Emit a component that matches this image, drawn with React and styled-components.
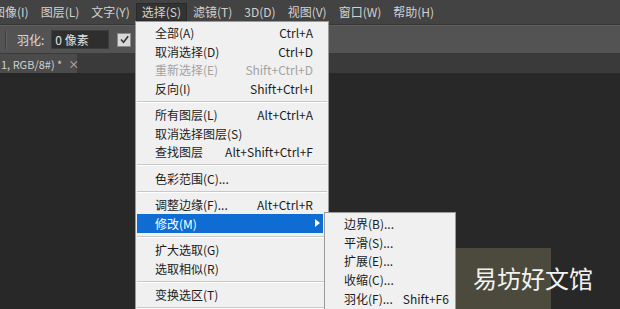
import React from "react";
import styled, { createGlobalStyle } from "styled-components";

const GlobalStyle = createGlobalStyle`
    html, body {
        margin: 0;
        padding: 0;
        background: #282828;
        overflow: hidden;
    }
    body {
        font-family: "Noto Sans CJK SC", "Liberation Sans", sans-serif;
        font-size: 12px;
    }
`;

const topMenus = ["图像(I)", "图层(L)", "文字(Y)", "选择(S)", "滤镜(T)", "3D(D)", "视图(V)", "窗口(W)", "帮助(H)"];

const selectMenu = [
    { label: "全部(A)", key: "Ctrl+A" },
    { label: "取消选择(D)", key: "Ctrl+D" },
    { label: "重新选择(E)", key: "Shift+Ctrl+D", disabled: true },
    { label: "反向(I)", key: "Shift+Ctrl+I" },
    "sep",
    { label: "所有图层(L)", key: "Alt+Ctrl+A" },
    { label: "取消选择图层(S)" },
    { label: "查找图层", key: "Alt+Shift+Ctrl+F" },
    "sep",
    { label: "色彩范围(C)..." },
    "sep",
    { label: "调整边缘(F)...", key: "Alt+Ctrl+R" },
    { label: "修改(M)", sub: true, active: true },
    "sep",
    { label: "扩大选取(G)" },
    { label: "选取相似(R)" },
    "sep",
    { label: "变换选区(T)" },
    "sep",
    { label: "在快速蒙版模式下编辑(Q)" },
];

const modifyMenu = [
    { label: "边界(B)..." },
    { label: "平滑(S)..." },
    { label: "扩展(E)..." },
    { label: "收缩(C)..." },
    { label: "羽化(F)...", key: "Shift+F6" },
];

export default function App() {
    return (
        <Screen>
            <GlobalStyle />
            <MenuBar>
                {topMenus.map((m, i) => (
                    <MenuHead key={m} $open={i === 3} $first={i === 0}>{m}</MenuHead>
                ))}
            </MenuBar>
            <OptionsBar>
                <Divider />
                <OptLabel>羽化:</OptLabel>
                <OptInput>0 像素</OptInput>
                <Check>
                    <svg width="11" height="11" viewBox="0 0 11 11">
                        <path d="M2 5.5 L4.5 8.2 L9.2 2.2" fill="none" stroke="#333" strokeWidth="1.6" />
                    </svg>
                </Check>
                <OptLabel>消除锯齿</OptLabel>
            </OptionsBar>
            <TabBar>
                <DocTab>
                    <span>1, RGB/8#) *</span>
                    <Close>×</Close>
                </DocTab>
            </TabBar>
            <Canvas>
                <DocArea />
                <Watermark>易坊好文馆</Watermark>
            </Canvas>

            <Dropdown>
                {selectMenu.map((it, i) =>
                    it === "sep" ? (
                        <Sep key={i} />
                    ) : (
                        <Item key={i} $disabled={it.disabled} $active={it.active}>
                            <span>{it.label}</span>
                            {it.key && <Key>{it.key}</Key>}
                            {it.sub && (
                                <Arrow viewBox="0 0 5 8" width="5" height="8">
                                    <path d="M0 0 L5 4 L0 8 Z" fill="#fff" />
                                </Arrow>
                            )}
                        </Item>
                    )
                )}
            </Dropdown>

            <SubMenu>
                {modifyMenu.map((it) => (
                    <SubItem key={it.label}>
                        <span>{it.label}</span>
                        {it.key && <Key>{it.key}</Key>}
                    </SubItem>
                ))}
            </SubMenu>
        </Screen>
    );
}

const Screen = styled.div`
    position: relative;
    width: 620px;
    height: 309px;
    display: flex;
    flex-direction: column;
    overflow: hidden;
    background: #282828;
`;

const MenuBar = styled.div`
    height: 24px;
    background: #434343;
    border-bottom: 1px solid #363636;
    display: flex;
    align-items: flex-start;
    flex-shrink: 0;
`;

const MenuHead = styled.div`
    height: 18px;
    line-height: 18px;
    margin-top: 3px;
    padding: 0 6px;
    margin-left: ${(p) => (p.$first ? "-13px" : "0")};
    color: #d2d2d2;
    white-space: nowrap;
    background: ${(p) => (p.$open ? "#333333" : "transparent")};
    box-shadow: ${(p) => (p.$open ? "inset 0 0 0 1px #2a2a2a" : "none")};
`;

const OptionsBar = styled.div`
    height: 27px;
    background: #535353;
    border-top: 1px solid #5e5e5e;
    border-bottom: 1px solid #3a3a3a;
    display: flex;
    align-items: center;
    flex-shrink: 0;
`;

const Divider = styled.div`
    width: 1px;
    height: 18px;
    margin-left: 5px;
    background: #3e3e3e;
    border-right: 1px solid #626262;
`;

const OptLabel = styled.span`
    color: #dadada;
    margin-left: 10px;
    white-space: nowrap;
`;

const OptInput = styled.div`
    width: 53px;
    height: 17px;
    line-height: 17px;
    padding-left: 3px;
    background: #2e2e2e;
    border: 1px solid #3c3c3c;
    color: #e2e2e2;
    margin-left: 7px;
`;

const Check = styled.div`
    width: 12px;
    height: 12px;
    margin-left: 8px;
    background: #d8d8d8;
    border: 1px solid #8a8a8a;
    display: flex;
    align-items: center;
    justify-content: center;
    & + span {
        margin-left: 4px;
    }
`;

const TabBar = styled.div`
    height: 19px;
    background: #3a3a3a;
    display: flex;
    flex-shrink: 0;
`;

const DocTab = styled.div`
    width: 77px;
    background: #4b4b4b;
    color: #cfcfcf;
    font-size: 11px;
    display: flex;
    align-items: center;
    padding-left: 1px;
    box-sizing: border-box;
    white-space: nowrap;
`;

const Close = styled.span`
    margin-left: 6px;
    font-size: 11px;
    color: #bdbdbd;
`;

const Canvas = styled.div`
    position: relative;
    flex: 1;
    background: #282828;
`;

const DocArea = styled.div`
    position: absolute;
    left: 380px;
    top: 175px;
    width: 171px;
    height: 200px;
    background: #4b4a3c;
`;

const Watermark = styled.div`
    position: absolute;
    left: 473px;
    top: 191px;
    font-size: 24px;
    line-height: 28px;
    color: #f2f2f2;
    white-space: nowrap;
`;

const Dropdown = styled.div`
    position: absolute;
    left: 135px;
    top: 21px;
    width: 192px;
    padding-top: 1.5px;
    background: #f0f0f0;
    border: 1px solid #9a9a9a;
`;

const Item = styled.div`
    position: relative;
    height: 18.5px;
    margin: 0 5px 0 1px;
    padding: 0 10px 0 18px;
    display: flex;
    align-items: center;
    white-space: nowrap;
    color: ${(p) => (p.$active ? "#ffffff" : p.$disabled ? "#a3a3a3" : "#1c1c1c")};
    background: ${(p) => (p.$active ? "#0e6cd2" : "transparent")};
`;

const Key = styled.span`
    margin-left: auto;
    padding-left: 10px;
`;

const Arrow = styled.svg`
    position: absolute;
    right: 3px;
    top: 5px;
`;

const Sep = styled.div`
    height: 8px;
    margin: 0 1px;
    display: flex;
    align-items: center;
    &::before {
        content: "";
        flex: 1;
        height: 1px;
        background: #c8c8c8;
        border-bottom: 1px solid #ffffff;
    }
`;

const SubMenu = styled.div`
    position: absolute;
    left: 324px;
    top: 212px;
    width: 130px;
    padding-top: 1.5px;
    padding-bottom: 10px;
    background: #f0f0f0;
    border: 1px solid #9a9a9a;
`;

const SubItem = styled.div`
    height: 18.6px;
    padding: 0 10px 0 19px;
    display: flex;
    align-items: center;
    white-space: nowrap;
    color: #1c1c1c;
`;
